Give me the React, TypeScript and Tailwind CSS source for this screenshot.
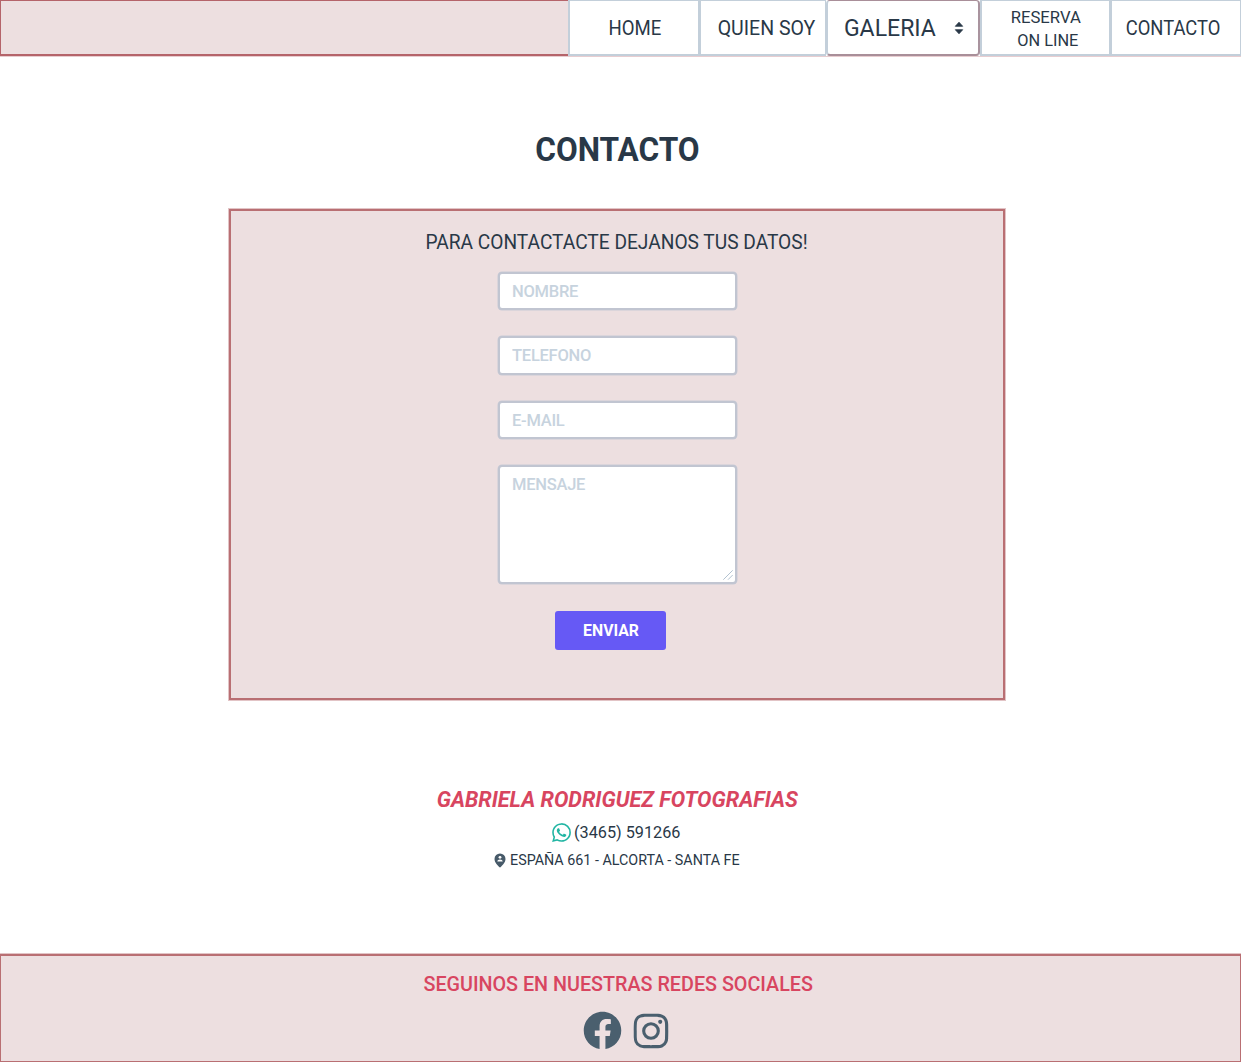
import React from "react";
import { BiLogoFacebookCircle, BiLogoInstagram, BiLogoWhatsapp } from "react-icons/bi";

const navCell =
  "flex h-14 shrink-0 items-center justify-center border-t border-r border-b-2 border-l-2 border-[#c3cfda] bg-white text-[21px] leading-none whitespace-nowrap";

const fieldClass =
  "block w-[239px] rounded-[4px] border-2 border-[#c1c5d1] bg-white px-3 text-[16.5px] font-medium tracking-[-0.25px] text-[#293847] shadow-[0_0_0_0.5px_#c9cbd6] outline-none placeholder:text-[#c7d3de] placeholder:opacity-100";

function Header() {
  return (
    <header className="flex h-14 shadow-[0_1px_0_#e8cdd0]">
      <div className="h-14 flex-1 border-t border-b-2 border-l border-[#b5646a] bg-[#eddfe0]" />
      <nav className="flex">
        <a className={`${navCell} w-[131px] pt-0.5`}>
          <span className="ml-px scale-x-[0.885]">HOME</span>
        </a>
        <a className={`${navCell} w-[127px] pt-0.5 pl-1.5`}>
          <span className="scale-x-[0.93]">QUIEN SOY</span>
        </a>
        <button className="flex h-14 w-[154px] items-center justify-between rounded-[4px] border-t border-r-2 border-b-2 border-l-2 border-t-[#a98f99] border-r-[#a9939e] border-b-[#a98f99] border-l-[#c3cfda] bg-white pr-[14px] pl-[14px] text-[24px] leading-none">
          <span className="scale-x-[0.96]">GALERIA</span>
          <svg viewBox="0 0 10 14" className="h-[14px] w-[10px] fill-[#293847]">
            <path d="M5 1.2 8.7 5.3H1.3ZM5 12.8 1.3 8.7h7.4Z" stroke="#293847" strokeWidth=".8" strokeLinejoin="round" />
          </svg>
        </button>
        <a className={`${navCell} w-[130px] flex-col pt-0.5`}>
          <span className="scale-x-[0.98] text-[17px] leading-[23px]">RESERVA</span>
          <span className="ml-1 scale-x-[0.96] text-[17px] leading-[23px]">ON LINE</span>
        </a>
        <a className={`${navCell} w-[131px] pt-0.5 pr-1.5`}>
          <span className="scale-x-[0.875]">CONTACTO</span>
        </a>
      </nav>
    </header>
  );
}

function ContactForm() {
  return (
    <form className="ml-[229px] flex h-[491px] w-[776px] flex-col items-center border-2 border-[#b96f73] bg-[#eddfe0] pt-[17px] shadow-[0_0_0_1px_#e2c4c6]">
      <p className="scale-x-[0.912] text-[21px] leading-[28px] whitespace-nowrap">PARA CONTACTACTE DEJANOS TUS DATOS!</p>
      <div className="mt-[15.5px] ml-px flex flex-col gap-[26px]">
        <input className={`${fieldClass} h-[38.5px] pt-px`} placeholder="NOMBRE" />
        <input className={`${fieldClass} h-[38.5px] pt-px`} placeholder="TELEFONO" />
        <input className={`${fieldClass} h-[38.5px] pt-px`} placeholder="E-MAIL" />
        <div className="relative">
          <textarea className={`${fieldClass} h-[119px] resize-none pt-[7px] leading-[22px]`} placeholder="MENSAJE" />
          <svg viewBox="0 0 10 10" className="absolute right-1 bottom-1 h-[10px] w-[10px] fill-none stroke-[#b3c2d0]">
            <path d="M.3 9.7 9.7.3M5 9.7 9.7 5" />
          </svg>
        </div>
      </div>
      <button type="button" className="mt-[26.5px] -ml-[13px] flex h-[39px] w-[111px] items-center justify-center rounded-[3px] bg-[#6659f5] pt-px pl-px text-[17px] font-bold text-white">
        <span className="scale-x-[0.93]">ENVIAR</span>
      </button>
    </form>
  );
}

function PersonPin() {
  return (
    <svg viewBox="0 0 12 15" className="h-[15px] w-[12px] shrink-0">
      <path d="M6 .4A5.5 5.5 0 0 0 .5 5.9C.5 9.6 4 12.6 6 14.6c2-2 5.5-5 5.5-8.7A5.5 5.5 0 0 0 6 .4Z" fill="#475a69" />
      <circle cx="6" cy="4.3" r="1.4" fill="#fff" />
      <path d="M3.3 8.4c0-1.3 1.3-2 2.7-2s2.7.7 2.7 2Z" fill="#fff" />
    </svg>
  );
}

export default function App() {
  return (
    <div className="flex h-[1062px] w-[1241px] flex-col overflow-hidden bg-white font-['Roboto',sans-serif] text-[#293847]">
      <Header />
      <main className="flex flex-col">
        <h1 className="mt-[67px] flex h-[52px] w-[1234px] items-center justify-center text-[34px] font-bold">
          <span className="scale-x-[0.93]">CONTACTO</span>
        </h1>
        <div className="pt-[34px]">
          <ContactForm />
        </div>
        <section className="mt-[81.5px] flex w-[1235px] flex-col items-center">
          <h2 className="scale-x-[0.98] text-[22px] leading-[36px] font-bold whitespace-nowrap text-[#d84560] italic">GABRIELA RODRIGUEZ FOTOGRAFIAS</h2>
          <div className="mt-[3px] flex h-6 w-[137px] items-center">
            <BiLogoWhatsapp className="size-[25px] shrink-0 text-[#21b5a3]" />
            <span className="origin-left scale-x-[0.955] pt-px text-[17px] whitespace-nowrap">(3465) 591266</span>
          </div>
          <div className="mt-[3px] flex h-[26px] w-[247px] items-center gap-[4px]">
            <PersonPin />
            <span className="origin-left scale-x-[0.954] text-[15px] whitespace-nowrap">ESPAÑA 661 - ALCORTA - SANTA FE</span>
          </div>
        </section>
      </main>
      <footer className="mt-auto flex h-[108px] flex-col items-center border-t-2 border-r border-b border-l border-[#b96f73] bg-[#eddfe0] pt-[14px] shadow-[0_-1px_0_#e2c4c6]">
        <p className="mr-[5px] scale-x-[0.94] text-[21px] leading-[28px] font-medium whitespace-nowrap text-[#d84560]">SEGUINOS EN NUESTRAS REDES SOCIALES</p>
        <div className="mt-[10px] ml-[12px] flex gap-[3px] text-[#4a5f6e]">
          <BiLogoFacebookCircle className="size-[45px]" />
          <BiLogoInstagram className="size-[46px]" />
        </div>
      </footer>
    </div>
  );
}
